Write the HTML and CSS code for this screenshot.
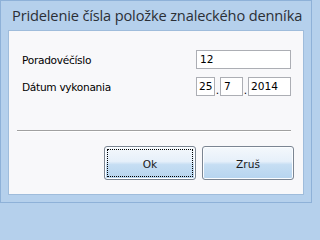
FILE: index.html
```html
<!DOCTYPE html>
<html>
<head>
<meta charset="utf-8">
<link rel="stylesheet" href="styles.css">
</head>
<body>
<div class="window">
  <div class="titlebar">Pridelenie čísla položke znaleckého denníka</div>
  <div class="client">
    <div class="form">
      <div class="row">
        <span class="label">Poradovéčíslo</span>
        <span class="field wide">12</span>
      </div>
      <div class="row">
        <span class="label">Dátum vykonania</span>
        <div class="date">
          <span class="field day">25</span><span class="dot">.</span><span class="field month">7</span><span class="dot">.</span><span class="field year">2014</span>
        </div>
      </div>
    </div>
    <div class="sep"></div>
    <div class="buttons">
      <button class="btn focused"><span class="focus">Ok</span></button>
      <button class="btn"><span class="focus none">Zruš</span></button>
    </div>
  </div>
</div>
</body>
</html>
```
FILE: styles.css
```css
html, body {
  margin: 0;
  padding: 0;
  background: #b5d0ec;
}
.window {
  width: 312px;
  height: 203px;
  box-sizing: border-box;
  border: 1px solid #8eb1d8;
  background: #b5d0ec;
  display: flex;
  flex-direction: column;
}
.titlebar {
  height: 29px;
  box-sizing: border-box;
  padding: 2px 0 0 11px;
  font-family: "Open Sans", "Noto Sans", sans-serif;
  font-size: 14.6px;
  line-height: 24px;
  color: #2b2f36;
  white-space: nowrap;
  letter-spacing: -0.15px;
}
.client {
  margin: 0 7px 7px 7px;
  flex: 1;
  background: #f8f8fa;
  border: 1px solid #9fbcdb;
  display: flex;
  flex-direction: column;
  font-family: "DejaVu Sans", sans-serif;
  font-size: 10.6px;
  color: #000;
}
.form {
  padding: 19px 0 0 13px;
  display: flex;
  flex-direction: column;
  gap: 8px;
}
.row {
  display: flex;
  align-items: center;
  height: 19px;
}
.label {
  width: 174px;
  letter-spacing: -0.3px;
}
.field {
  box-sizing: border-box;
  height: 19px;
  border: 1px solid #acaeb4;
  background: #ffffff;
  padding: 0 0 0 3px;
  line-height: 17px;
  display: inline-block;
}
.wide { width: 95px; }
.date { display: flex; align-items: flex-end; }
.day { width: 19px; padding-left: 2px; }
.month { width: 23px; }
.year { width: 43px; padding-left: 2px; }
.dot {
  width: 5px;
  text-align: center;
  line-height: 12px;
}
.sep {
  margin: 34px 12px 0 8px;
  height: 1px;
  background: #a0a0a0;
  border-bottom: 1px solid #ffffff;
}
.buttons {
  display: flex;
  gap: 6px;
  padding: 14px 0 0 95px;
}
.btn {
  width: 92px;
  height: 34px;
  box-sizing: border-box;
  border: 1px solid #7b8592;
  border-radius: 3px;
  background: linear-gradient(#f4f8fc 0%, #e6f0fa 45%, #c6def3 55%, #b6d4ef 100%);
  box-shadow: inset 0 0 0 1px #fbfdff;
  padding: 2px;
  font-family: "DejaVu Sans", sans-serif;
  font-size: 10.6px;
  color: #1a1a1a;
  display: flex;
}
.focus {
  flex: 1;
  border: 1px dotted #000;
  display: flex;
  align-items: center;
  justify-content: center;
  padding-top: 1px;
}
.focus.none { border-color: transparent; }
```
